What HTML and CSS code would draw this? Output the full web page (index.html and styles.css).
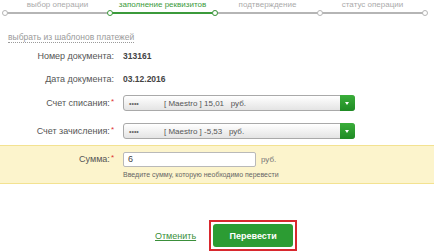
FILE: index.html
```html
<!DOCTYPE html>
<html lang="ru">
<head>
    <meta charset="UTF-8">
    <title>Перевод</title>
    <link rel="stylesheet" href="styles.css">
</head>
<body>
    <!-- Steps -->
    <div class="steps">
        <div class="step">
            <div class="step-label">выбор операции</div>
            <div class="step-track"><span class="dot"></span></div>
        </div>
        <div class="step active">
            <div class="step-label">заполнение реквизитов</div>
            <div class="step-track"><span class="dot"></span><span class="dot dot-end"></span></div>
        </div>
        <div class="step">
            <div class="step-label">подтверждение</div>
            <div class="step-track"><span class="dot"></span></div>
        </div>
        <div class="step">
            <div class="step-label">статус операции</div>
            <div class="step-track"><span class="dot"></span><span class="dot dot-end"></span></div>
        </div>
    </div>

    <a class="templates" href="#">выбрать из шаблонов платежей</a>

    <!-- Form -->
    <div class="form">
        <div class="form-row row-doc">
            <div class="label">Номер документа:</div>
            <div class="value">313161</div>
        </div>
        <div class="form-row row-date">
            <div class="label">Дата документа:</div>
            <div class="value">03.12.2016</div>
        </div>
        <div class="form-row row-from">
            <div class="label">Счет списания:<span class="req">*</span></div>
            <div class="select">
                <span class="card">••••</span>
                <span class="select-text">[ Maestro ] 15,01 &nbsp; руб.</span>
                <span class="arrow"></span>
            </div>
        </div>
        <div class="form-row row-to">
            <div class="label">Счет зачисления:<span class="req">*</span></div>
            <div class="select">
                <span class="card">••••</span>
                <span class="select-text">[ Maestro ] -5,53 &nbsp; руб.</span>
                <span class="arrow"></span>
            </div>
        </div>
    </div>

    <div class="sum-band">
        <div class="form-row">
            <div class="label">Сумма:<span class="req">*</span></div>
            <div class="sum-field">
                <div class="input">6</div>
                <span class="currency">руб.</span>
            </div>
        </div>
        <div class="hint">Введите сумму, которую необходимо перевести</div>
    </div>

    <!-- Actions -->
    <div class="actions">
        <a class="cancel" href="#">Отменить</a>
        <div class="highlight">
            <button class="submit">Перевести</button>
        </div>
    </div>
</body>
</html>
```

FILE: styles.css
```css
body {
    margin: 0;
    font-family: "Liberation Sans", Arial, sans-serif;
    background-color: #fff;
    color: #555;
}
.steps {
    display: flex;
    padding: 0 9px 0 5px;
}
.step {
    flex: 1;
    text-align: center;
    font-size: 8px;
    color: #aaa;
}
.step-label {
    height: 10px;
    line-height: 10px;
}
.step-track {
    position: relative;
    height: 6px;
}
.step-track::before {
    content: "";
    position: absolute;
    left: 0;
    right: 0;
    top: 2px;
    height: 2px;
    background-color: #b5b5b5;
}
.dot {
    position: absolute;
    left: -3px;
    top: 0;
    width: 6px;
    height: 6px;
    box-sizing: border-box;
    border: 1.5px solid #b5b5b5;
    border-radius: 50%;
    background-color: #fff;
}
.dot-end {
    left: auto;
    right: -3px;
}
.step.active {
    color: #3b9a3b;
}
.step.active .step-track::before {
    background-color: #3b9a3b;
}
.step.active .dot {
    border-color: #3b9a3b;
    z-index: 1;
}
.templates {
    display: inline-block;
    margin: 16px 0 0 8px;
    font-size: 8.5px;
    line-height: 10px;
    color: #9a9a9a;
    text-decoration: none;
    border-bottom: 1px dotted #9a9a9a;
}
.form {
    margin-top: 4px;
}
.form-row {
    display: grid;
    grid-template-columns: 123px 1fr;
    align-items: center;
    height: 16px;
}
.label {
    text-align: right;
    padding-right: 9px;
    font-size: 9px;
    color: #555;
    white-space: nowrap;
}
.req {
    color: #e03030;
    font-size: 8px;
    vertical-align: top;
    line-height: 8px;
    margin-left: 1px;
}
.value {
    font-size: 8.5px;
    font-weight: bold;
    color: #444;
}
.row-date {
    margin-top: 7px;
}
.row-from {
    margin-top: 8px;
}
.row-to {
    margin-top: 12px;
}
.select {
    position: relative;
    display: flex;
    align-items: center;
    width: 232px;
    height: 16px;
    box-sizing: border-box;
    border: 1px solid #a9a9a9;
    border-radius: 3px;
    background: linear-gradient(#ffffff, #e4e4e4);
    font-size: 8px;
    color: #555;
}
.card {
    width: 35px;
    padding-left: 5px;
    font-size: 7px;
    color: #666;
}
.select-text {
    white-space: nowrap;
}
.arrow {
    position: absolute;
    right: -1px;
    top: -1px;
    width: 15px;
    height: 16px;
    border-radius: 0 3px 3px 0;
    background: linear-gradient(#3aae3a, #1f8a24);
}
.arrow::after {
    content: "";
    position: absolute;
    left: 5px;
    top: 7px;
    border-left: 2.5px solid transparent;
    border-right: 2.5px solid transparent;
    border-top: 3px solid #fff;
}
.sum-band {
    margin-top: 6px;
    padding: 5px 0 3px;
    background-color: #fcf4cc;
    border-top: 1px solid #f3e291;
    border-bottom: 1px solid #f3e291;
}
.sum-field {
    display: flex;
    align-items: center;
}
.input {
    width: 133px;
    height: 15px;
    box-sizing: border-box;
    padding-left: 4px;
    border: 1px solid #b9b9b9;
    border-radius: 2px;
    background-color: #fff;
    font-size: 9px;
    line-height: 13px;
    color: #444;
}
.currency {
    margin-left: 5px;
    font-size: 8px;
    color: #777;
}
.hint {
    margin: 3px 0 0 123px;
    font-size: 7px;
    line-height: 10px;
    color: #666;
}
.actions {
    display: flex;
    align-items: center;
    gap: 13px;
    margin-top: 36px;
    padding-left: 155px;
}
.cancel {
    font-size: 9px;
    color: #3a8f3a;
    text-decoration: underline;
}
.highlight {
    border: 2px solid #d8282e;
    padding: 2px;
}
.submit {
    display: block;
    width: 80px;
    height: 23px;
    border: none;
    border-radius: 3px;
    background-color: #2c9c33;
    color: #fff;
    font-family: "Liberation Sans", Arial, sans-serif;
    font-size: 9px;
    font-weight: bold;
    cursor: pointer;
}
```
